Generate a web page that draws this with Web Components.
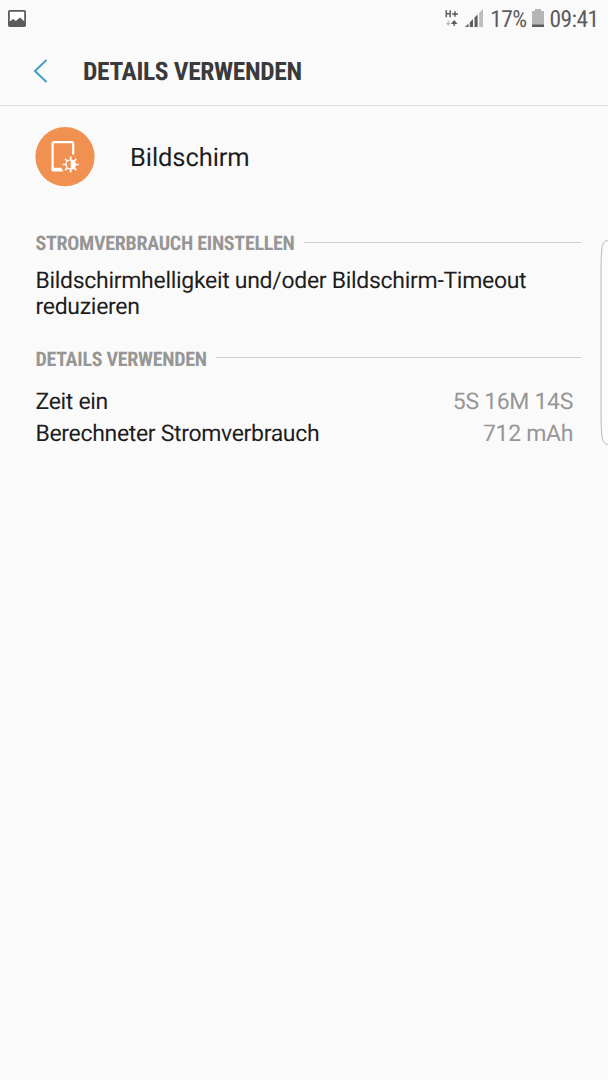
<!DOCTYPE html>
<html lang="de">
<head>
<meta charset="utf-8">
<title>Details verwenden</title>
<style>
	body {
		margin: 0;
		background-color: #FAFAFA;
		color: #1E1E1E;
		font-family: Roboto, "Liberation Sans", sans-serif;
		text-rendering: geometricPrecision;
	}
</style>
</head>
<body>
<battery-page>
	<status-bar battery="17%" time="09:41"></status-bar>
	<title-bar>DETAILS VERWENDEN</title-bar>
	<app-entry>Bildschirm</app-entry>
	<detail-section heading="STROMVERBRAUCH EINSTELLEN">
		<hint-text>Bildschirmhelligkeit und/oder Bildschirm-Timeout reduzieren</hint-text>
	</detail-section>
	<detail-section heading="DETAILS VERWENDEN">
		<detail-row value="5S 16M 14S">Zeit ein</detail-row>
		<detail-row value="712 mAh">Berechneter Stromverbrauch</detail-row>
	</detail-section>
</battery-page>

<script>
class BaseElement extends HTMLElement {
	connectedCallback() {
		if (this.shadowRoot) return;
		const template = document.createElement("template");
		template.innerHTML = this.render();
		this.attachShadow({ mode: "open" }).appendChild(template.content);
	}
}

class BatteryPage extends BaseElement {
	render() {
		return `
			<style>
				:host {
					display: flex;
					flex-flow: column nowrap;
					position: relative;
					height: 1080px;
					overflow: hidden;
				}

				/* edge panel handle, lies over the content */
				svg {
					position: absolute;
					top: 238px;
					right: 0;
				}
			</style>
			<slot></slot>
			<svg width="9" height="209" viewBox="0 0 9 209" fill="#FCFCFC" stroke="#B9B9B9">
				<path d="M10 2.5C5 2.5 3.4 5 2.7 12Q2 20 2 34V174Q2 188 2.7 196C3.3 203 5 206.5 10 206.5"/>
			</svg>
		`;
	}
}

class StatusBar extends BaseElement {
	render() {
		return `
			<style>
				:host {
					display: flex;
					align-items: center;
					justify-content: space-between;
					box-sizing: border-box;
					height: 36px;
					padding: 0 9.5px 0 8px;
					color: #5C5C5C;
					font: 400 23.5px/36px "Roboto Condensed", Roboto, sans-serif;
					font-stretch: 75%;
					letter-spacing: -.6px;
				}

				div {
					display: flex;
					align-items: center;
				}

				svg {
					display: block;
				}

				span {
					padding-top: 2px;
				}

				.network { margin-right: 7px; }
				.signal { margin-right: 7.5px; }
				.battery { margin: 0 6px 0 5.2px; }
			</style>
			<svg width="18" height="18" viewBox="0 0 18 18">
				<rect x=".9" y="1.9" width="16.2" height="15.2" rx=".8" fill="#FFFFFF" stroke="#5C5C5C" stroke-width="1.8"/>
				<path d="M1 13L5.2 10L7.8 12L12 8.5L17 13V17H1Z" fill="#5C5C5C"/>
			</svg>
			<div>
				<svg class="network" width="13" height="18" viewBox="0 0 13 18">
					<path d="M1.3 1.3V8.3M5.2 1.3V8.3M1.3 4.8H5.2M7 5H13M10 2.2V7.8" fill="none" stroke="#5C5C5C" stroke-width="1.5"/>
					<path d="M3.3 11.5V14.5M1.5 14H5.1L3.3 16.3Z" fill="#BDBDBD" stroke="#BDBDBD"/>
					<path d="M9.2 17V14M7.4 14.2H11L9.2 12Z" fill="#5C5C5C" stroke="#5C5C5C" stroke-width="1.4"/>
				</svg>
				<svg class="signal" width="18" height="18" viewBox="0 0 18 18" fill="#5C5C5C">
					<path d="M0 18L3.5 14.5V18ZM4.8 13.2L8 10V18H4.8ZM9.5 8.5L12.6 5.4V18H9.5Z"/>
					<path d="M14.2 3.8L18 0V18H14.2Z" fill="#BDBDBD"/>
				</svg>
				<span>${this.getAttribute("battery")}</span>
				<svg class="battery" width="12" height="18" viewBox="0 0 12 18">
					<path d="M3 0H9V2H12V18H0V2H3Z" fill="#B5B5B5"/>
					<path d="M0 15.5H12V18H0Z" fill="#5C5C5C"/>
				</svg>
				<span>${this.getAttribute("time")}</span>
			</div>
		`;
	}
}

class TitleBar extends BaseElement {
	render() {
		return `
			<style>
				:host {
					display: flex;
					align-items: center;
					box-sizing: border-box;
					height: 70px;
					padding-left: 33px;
					border-bottom: 1px solid #E0E0E0;
				}

				h1 {
					margin: 0 0 0 34px;
					padding-top: 3px;
					color: #3A3A3A;
					font: 700 25.5px/30px "Roboto Condensed", Roboto, sans-serif;
					font-stretch: 75%;
					letter-spacing: -.34px;
				}
			</style>
			<svg width="16" height="24" viewBox="0 0 16 24" fill="none" stroke="#459FC0" stroke-width="2">
				<path d="M13.5 1L2 12L13.5 23"/>
			</svg>
			<h1><slot></slot></h1>
		`;
	}
}

class AppEntry extends BaseElement {
	render() {
		return `
			<style>
				:host {
					display: flex;
					align-items: center;
					gap: 35px;
					padding: 21px 35px 0;
					height: 60px;
					font-size: 25.5px;
					letter-spacing: -.08px;
				}

				span {
					padding-top: 2px;
				}
			</style>
			<svg width="60" height="60" viewBox="0 0 60 60">
				<circle cx="30" cy="29.7" r="29.6" fill="#F09151"/>
				<path d="M17.6 42V16.7Q17.6 15.1 19.2 15.1H36.6Q38.2 15.1 38.2 16.7V27.5" fill="none" stroke="#FFFFFF" stroke-width="2.2"/>
				<path d="M16.5 40.8H26L28.5 44.6H18.7Q16.5 44.6 16.5 42.4Z" fill="#FFFFFF"/>
				<g transform="translate(35.7 37.5)">
					<path d="M0-8V-5M0 5V8M-8 0H-5M5 0H8M-5.6-5.6L-3.5-3.5M3.5 3.5L5.6 5.6M-5.6 5.6L-3.5 3.5M3.5-3.5L5.6-5.6" stroke="#FFFFFF" stroke-width="1.7"/>
					<circle r="5.3" fill="#FFFFFF"/>
					<path d="M0-4A4 4 0 0 0 0 4Z" fill="#F09151"/>
				</g>
			</svg>
			<span><slot></slot></span>
		`;
	}
}

class DetailSection extends BaseElement {
	render() {
		return `
			<style>
				:host {
					display: block;
					padding: 0 27px 0 35.5px;
					margin-top: 43px;
				}

				:host(:last-child) {
					margin-top: 26px;
				}

				header {
					display: flex;
					align-items: center;
					gap: 9px;
					height: 24px;
				}

				h2 {
					margin: 0;
					padding-top: 2px;
					color: #969696;
					font: 700 20px/24px "Roboto Condensed", Roboto, sans-serif;
					font-stretch: 75%;
					letter-spacing: -.29px;
					white-space: nowrap;
				}

				header::after {
					content: "";
					flex: 1;
					height: 1px;
					background-color: #CDCDCD;
				}
			</style>
			<header><h2>${this.getAttribute("heading")}</h2></header>
			<slot></slot>
		`;
	}
}

class HintText extends BaseElement {
	render() {
		return `
			<style>
				:host {
					display: block;
					margin-top: 13.5px;
					font-size: 23px;
					line-height: 26px;
					letter-spacing: -.3px;
				}
			</style>
			<slot></slot>
		`;
	}
}

class DetailRow extends BaseElement {
	render() {
		return `
			<style>
				:host {
					display: flex;
					justify-content: space-between;
					padding-right: 8px;
					font-size: 23px;
					line-height: 32.5px;
					letter-spacing: -.33px;
				}

				:host(:first-child) {
					margin-top: 16px;
				}

				.value {
					color: #969696;
				}
			</style>
			<span><slot></slot></span>
			<span class="value">${this.getAttribute("value")}</span>
		`;
	}
}

customElements.define("battery-page", BatteryPage);
customElements.define("status-bar", StatusBar);
customElements.define("title-bar", TitleBar);
customElements.define("app-entry", AppEntry);
customElements.define("detail-section", DetailSection);
customElements.define("hint-text", HintText);
customElements.define("detail-row", DetailRow);
</script>
</body>
</html>
